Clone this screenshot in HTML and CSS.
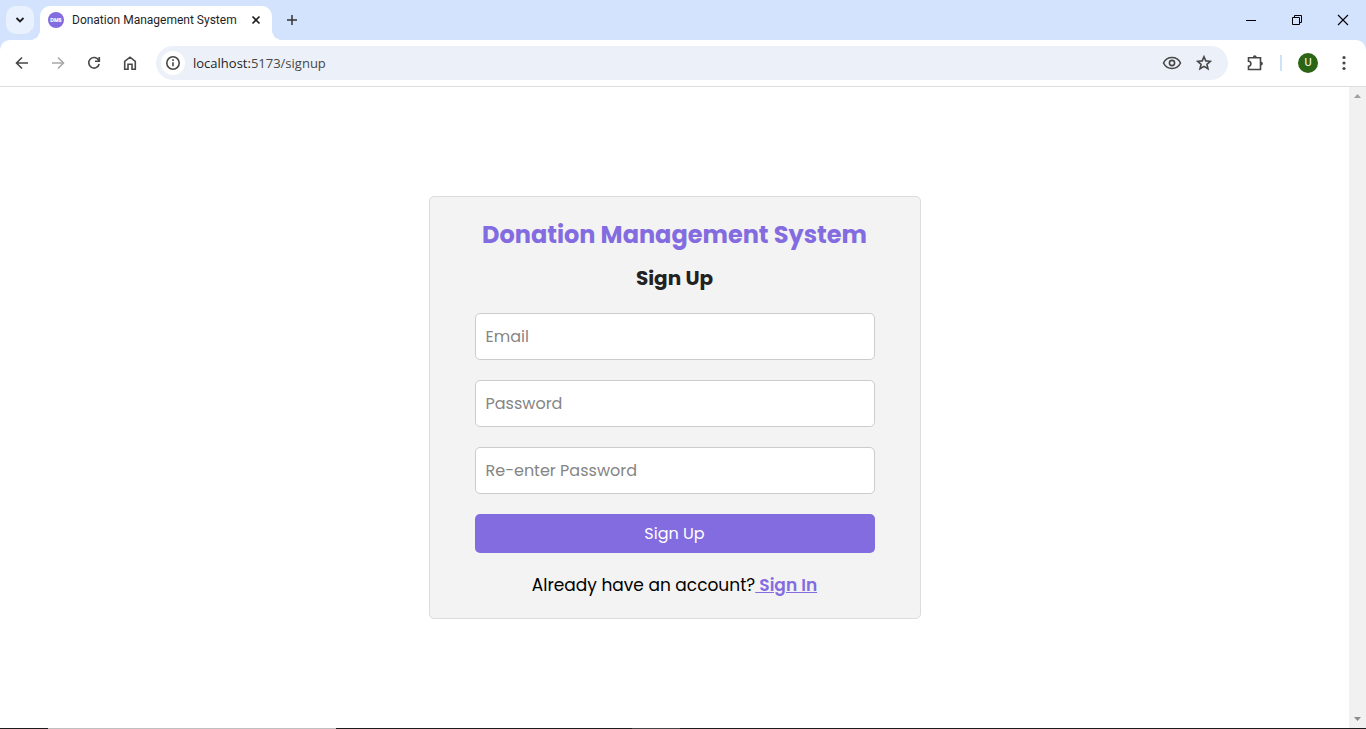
FILE: index.html
```html
<!DOCTYPE html>
<html lang="en">
<head>
<meta charset="utf-8">
<meta name="viewport" content="width=device-width, initial-scale=1">
<title>Donation Management System</title>
<link rel="stylesheet" href="styles.css">
</head>
<body>
<header class="browser">
  <div class="tabstrip">
    <button class="tab-search" aria-label="Search tabs"><svg width="10" height="8" viewBox="0 0 10 8"><path d="M1.500 2 5 5.500 8.500 2" fill="none" stroke="#1f1f1f" stroke-width="1.800"/></svg></button>
    <div class="tab">
      <span class="favicon"><svg width="16" height="16" viewBox="0 0 16 16"><circle cx="8" cy="8" r="8" fill="#836be0"/><text x="8" y="10" text-anchor="middle" class="favicon-text">DMS</text></svg></span>
      <span class="tab-title">Donation Management System</span>
      <button class="icon-button" aria-label="Close tab"><svg width="16" height="16" viewBox="0 0 16 16"><path d="m4.500 4.500 7 7m0-7-7 7" stroke="#1f1f1f" stroke-width="1.600"/></svg></button>
    </div>
    <button class="new-tab icon-button" aria-label="New tab"><svg width="16" height="16" viewBox="0 0 16 16"><path d="M8 3v10M3 8h10" stroke="#333" stroke-width="1.500"/></svg></button>
    <div class="window-controls">
      <button aria-label="Minimize"><svg width="12" height="12" viewBox="0 0 12 12"><path d="M1 6.500h10" stroke="#000"/></svg></button>
      <button aria-label="Restore"><svg width="12" height="12" viewBox="0 0 12 12" fill="none" stroke="#000"><path d="M1.500 3.500h7v7h-7zM3.500 3.500v-2h7v7h-2"/></svg></button>
      <button aria-label="Close"><svg width="12" height="12" viewBox="0 0 12 12"><path d="m1 1 10 10M11 1 1 11" stroke="#000" stroke-width="1.100"/></svg></button>
    </div>
  </div>
  <div class="toolbar">
    <nav class="nav-buttons" aria-label="Navigation">
      <button class="icon-button" aria-label="Back"><svg width="16" height="16" viewBox="0 0 16 16" class="line"><path d="M14 8H3M8 2.500 2.500 8 8 13.500"/></svg></button>
      <button class="icon-button" aria-label="Forward" disabled><svg width="16" height="16" viewBox="0 0 16 16" class="line faded"><path d="M2 8h11M8 2.500 13.500 8 8 13.500"/></svg></button>
      <button class="icon-button" aria-label="Reload"><svg width="16" height="16" viewBox="0 0 16 16" class="line"><path d="M12.700 5.200A5.300 5.300 0 1 0 13.200 9M13.300 2v4.200H9"/></svg></button>
      <button class="icon-button" aria-label="Home"><svg width="16" height="16" viewBox="0 0 16 16" class="line"><path d="M2.700 6.300 8 2.200l5.300 4.100v7.900H10V9.300H6v4.900H2.700z"/></svg></button>
    </nav>
    <div class="omnibox">
      <button class="site-info" aria-label="Site information"><svg width="16" height="16" viewBox="0 0 16 16" class="line"><circle cx="8" cy="8" r="6.200"/><path d="M8 7.200v4M8 4.300v1.600"/></svg></button>
      <a class="url" href="#signup"><span class="host">localhost:</span>5173/signup</a>
      <button class="icon-button" aria-label="Show tracking settings"><svg width="20" height="16" viewBox="0 0 20 16" class="line"><path d="M1.500 8C3.200 4.500 6.200 2.500 10 2.500S16.800 4.500 18.500 8c-1.700 3.500-4.700 5.500-8.500 5.500S3.200 11.500 1.500 8z"/><circle cx="10" cy="8" r="2.600"/></svg></button>
      <button class="icon-button" aria-label="Bookmark"><svg width="16" height="16" viewBox="0 0 16 16" class="line"><path d="m8 1.700 1.800 4.200 4.600.4L10.900 9.300l1.100 4.500L8 11.400l-4 2.400 1.100-4.500L1.600 6.300l4.600-.4z"/></svg></button>
    </div>
    <div class="toolbar-end">
      <button class="icon-button" aria-label="Extensions"><svg width="18" height="18" viewBox="0 0 18 18" class="line"><path d="M2.500 3.800H14.500V15.500H2.500V12.200C5.700 12 5.700 7.500 2.500 7.300z"/><path d="M6.900 3.200a1.900 1.900 0 0 1 3.800 0zM15 7.700a1.900 1.900 0 0 1 0 3.800z" fill="#474747" stroke="none"/></svg></button>
      <span class="divider"></span>
      <button class="avatar" aria-label="Profile">U</button>
      <button class="icon-button menu" aria-label="Menu"><svg width="16" height="16" viewBox="0 0 16 16" fill="#474747"><circle cx="8" cy="2.500" r="1.600"/><circle cx="8" cy="8" r="1.600"/><circle cx="8" cy="13.500" r="1.600"/></svg></button>
    </div>
  </div>
</header>
<div class="viewport">
  <main class="page">
    <form class="card" id="signup">
      <h1 class="title">Donation Management System</h1>
      <h2 class="subtitle">Sign Up</h2>
      <div class="fields">
        <input class="field" type="email" placeholder="Email" aria-label="Email">
        <input class="field" type="password" placeholder="Password" aria-label="Password">
        <input class="field" type="password" placeholder="Re-enter Password" aria-label="Re-enter Password">
        <button class="submit" type="submit">Sign Up</button>
      </div>
      <p class="switch">Already have an account?<a href="#signin"> Sign In</a></p>
    </form>
  </main>
  <div class="scrollbar">
    <svg width="17" height="17" viewBox="0 0 17 17"><path d="m5 11 3.500-4 3.500 4z" fill="#a0a0a0"/></svg>
    <svg width="17" height="17" viewBox="0 0 17 17"><path d="m5 6 3.500 4L12 6z" fill="#8c8c8c"/></svg>
  </div>
</div>
<footer class="taskbar"><span class="task-search"></span><span class="task-active"></span></footer>
</body>
</html>
```
FILE: styles.css
```css
* { box-sizing: border-box; }
body {
  margin: 0;
  min-height: 100vh;
  display: flex;
  flex-direction: column;
  background: #fff;
  font-family: Poppins, Inter, "Liberation Sans", sans-serif;
}
button { border: 0; padding: 0; background: none; font-family: inherit; }
svg { display: block; }
.browser { background: #d3e3fd; font-family: "Segoe UI", Roboto, sans-serif; }
.tabstrip { display: flex; align-items: flex-end; height: 40px; padding-left: 6px; }
.tab-search {
  display: grid;
  place-items: center;
  width: 28px;
  height: 28px;
  margin: 0 6px 6px 0;
  border-radius: 10px;
  background: #e9f1fe;
}
.tab {
  display: flex;
  align-items: center;
  gap: 8px;
  width: 232px;
  height: 34px;
  padding: 0 8px 6px;
  border-radius: 10px 10px 0 0;
  background: #fff;
  position: relative;
}
.tab::before, .tab::after {
  content: "";
  position: absolute;
  bottom: 0;
  width: 10px;
  height: 10px;
}
.tab::before { right: 100%; background: radial-gradient(circle at 0 0, #d3e3fd 10px, #fff 10px); }
.tab::after { left: 100%; background: radial-gradient(circle at 100% 0, #d3e3fd 10px, #fff 10px); }
.favicon-text { font: bold 5px Poppins, sans-serif; fill: #fff; }
.tab-title { flex: 1; font-size: 12px; line-height: 16px; color: #1f1f1f; white-space: nowrap; }
.icon-button { display: grid; place-items: center; flex: none; }
.new-tab { width: 28px; height: 28px; margin: 0 0 6px 6px; }
.window-controls { display: flex; height: 40px; margin-left: auto; }
.window-controls button { display: grid; place-items: center; width: 46px; }
.toolbar {
  display: flex;
  align-items: center;
  height: 47px;
  padding: 0 14px;
  border-bottom: 1px solid #dedede;
  border-radius: 10px 10px 0 0;
  background: #fff;
}
.line { fill: none; stroke: #474747; stroke-width: 1.6; }
.faded { stroke: #a8a8a8; }
.nav-buttons { display: flex; gap: 20px; margin-right: 18px; }
.omnibox {
  flex: 1;
  display: flex;
  align-items: center;
  gap: 14px;
  height: 34px;
  padding: 0 16px 0 5px;
  border-radius: 17px;
  background: #ecf1f9;
}
.site-info { display: grid; place-items: center; width: 24px; height: 24px; border-radius: 12px; background: #fff; }
.url {
  flex: 1;
  margin-left: -6px;
  font-family: "Segoe UI", "Open Sans", sans-serif;
  font-size: 13px;
  line-height: 20px;
  color: #474747;
  text-decoration: none;
}
.host { color: #1f1f1f; }
.toolbar-end { display: flex; align-items: center; gap: 16px; margin-left: 18px; }
.divider { width: 2px; height: 16px; background: #cfe2fb; }
.avatar {
  width: 20px;
  height: 20px;
  border-radius: 10px;
  background: #2c6415;
  color: #fff;
  font: 11px/20px Roboto, sans-serif;
}
.menu { margin-left: 2px; }
.viewport { flex: 1; display: flex; }
.page { flex: 1; display: grid; place-items: center; }
.card {
  width: 492px;
  max-width: 100%;
  padding: 20px 45px;
  border: 1px solid #dcdcdc;
  border-radius: 5px;
  background: #f3f3f3;
  text-align: center;
}
.title { margin: 0 0 10px; font-size: 24px; line-height: 36px; font-weight: 700; color: #836be0; }
.subtitle { margin: 0 0 20px; font-size: 20px; line-height: 30px; font-weight: 700; color: #222; }
.fields { display: flex; flex-direction: column; gap: 20px; }
.field {
  width: 100%;
  height: 47px;
  padding: 0 10px;
  border: 1px solid #ccc;
  border-radius: 5px;
  background: #fff;
  font-family: inherit;
  font-size: 16px;
}
.field::placeholder { color: #858585; opacity: 1; }
.submit { height: 39px; border-radius: 5px; background: #836be0; color: #fff; font-size: 16px; }
.switch { margin: 20px 0 0; font-size: 17px; line-height: 25px; color: #000; }
.switch a { color: #836be0; font-weight: 600; }
.scrollbar { display: flex; flex-direction: column; justify-content: space-between; width: 17px; background: #f1f1f1; }
.taskbar { display: flex; height: 1px; padding-left: 48px; background: #1c1c1c; }
.task-search { width: 288px; background: #bfbfbf; }
.task-active { width: 48px; margin-left: 296px; background: #444; }
```
